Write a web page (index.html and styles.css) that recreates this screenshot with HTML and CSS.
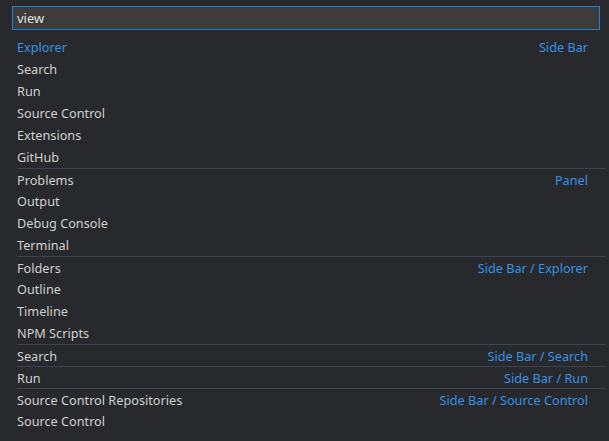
FILE: index.html
```html
<!DOCTYPE html>
<html>
<head>
<meta charset="utf-8">
<link rel="stylesheet" href="styles.css">
</head>
<body>
<div class="picker">
  <div class="input">view</div>
  <div class="list">
    <div class="row"><span class="label hl">Explorer</span><span class="desc">Side Bar</span></div>
    <div class="row"><span class="label">Search</span></div>
    <div class="row"><span class="label">Run</span></div>
    <div class="row"><span class="label">Source Control</span></div>
    <div class="row"><span class="label">Extensions</span></div>
    <div class="row"><span class="label">GitHub</span></div>
    <div class="row sep"><span class="label">Problems</span><span class="desc">Panel</span></div>
    <div class="row"><span class="label">Output</span></div>
    <div class="row"><span class="label">Debug Console</span></div>
    <div class="row"><span class="label">Terminal</span></div>
    <div class="row sep"><span class="label">Folders</span><span class="desc">Side Bar / Explorer</span></div>
    <div class="row"><span class="label">Outline</span></div>
    <div class="row"><span class="label">Timeline</span></div>
    <div class="row"><span class="label">NPM Scripts</span></div>
    <div class="row sep"><span class="label">Search</span><span class="desc">Side Bar / Search</span></div>
    <div class="row sep"><span class="label">Run</span><span class="desc">Side Bar / Run</span></div>
    <div class="row sep"><span class="label">Source Control Repositories</span><span class="desc">Side Bar / Source Control</span></div>
    <div class="row"><span class="label">Source Control</span></div>
  </div>
</div>
</body>
</html>
```
FILE: styles.css
```css
html, body {
  margin: 0;
  padding: 0;
  background: #28292c;
  height: 100%;
}
body {
  font-family: "Noto Sans", "Open Sans", sans-serif;
  font-size: 12.7px;
  color: #d0d0d0;
}
.picker {
  display: flex;
  flex-direction: column;
  padding-top: 6px;
}
.input {
  margin-left: 12px;
  width: 588px;
  height: 24px;
  box-sizing: border-box;
  border: 1px solid #1f80d6;
  background: #3e3c3b;
  color: #e0e0e0;
  padding-left: 4px;
  line-height: 22px;
  font-size: 13px;
}
.list {
  margin-top: 6px;
  display: flex;
  flex-direction: column;
}
.row {
  margin-left: 17px;
  width: 589px;
  height: 22px;
  box-sizing: border-box;
  display: flex;
  justify-content: space-between;
  align-items: center;
  padding-right: 18px;
}
.row.sep {
  border-top: 1px solid #3d4350;
}
.hl {
  color: #3592e6;
}
.desc {
  color: #3592e6;
}
```
